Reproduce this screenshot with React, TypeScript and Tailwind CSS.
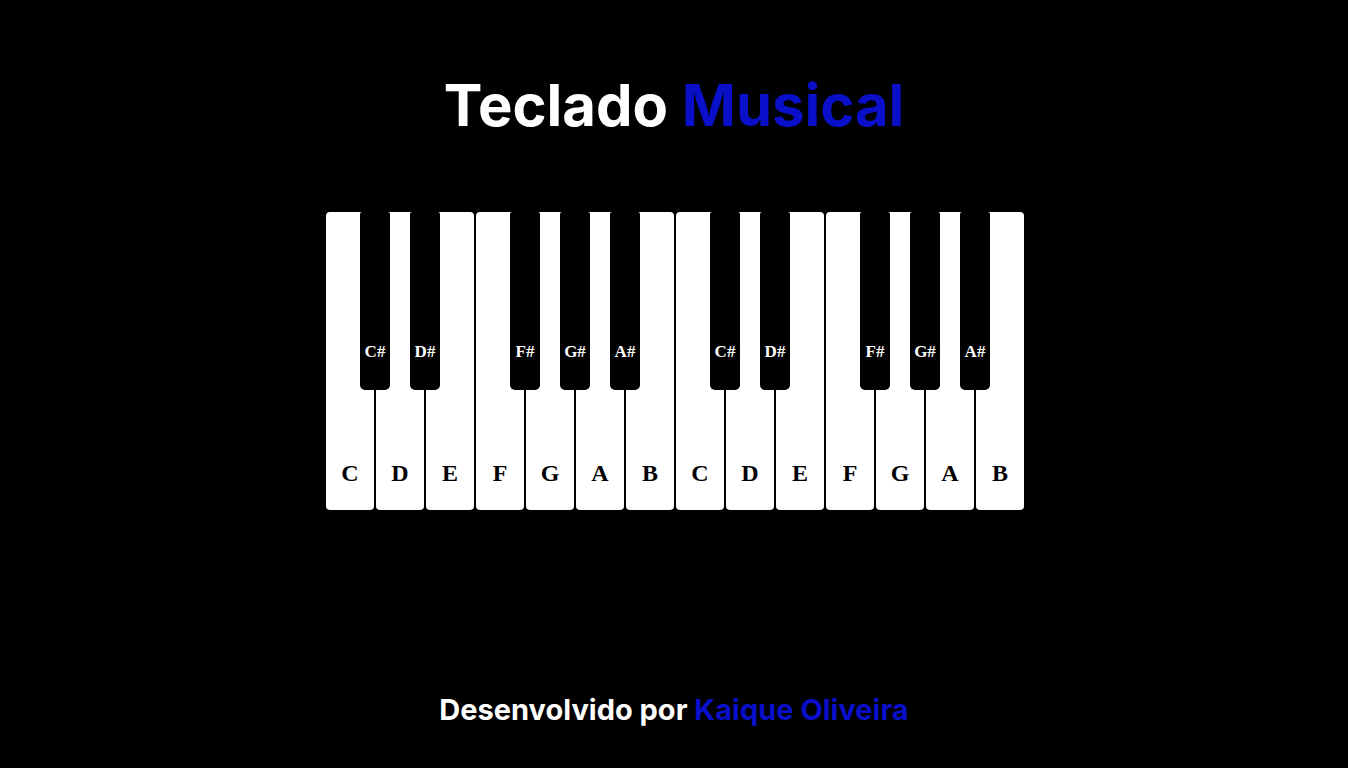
const octave = [
  { note: 'C', sharp: 'C#' },
  { note: 'D', sharp: 'D#' },
  { note: 'E' },
  { note: 'F', sharp: 'F#' },
  { note: 'G', sharp: 'G#' },
  { note: 'A', sharp: 'A#' },
  { note: 'B' },
];

const keys = [...octave, ...octave];

const App = () => {
  return (
    <div className="h-screen w-full bg-black flex flex-col items-center pt-[76px] font-['Inter',sans-serif]">
      <h1 className="text-[58px] leading-none font-bold text-white">
        Teclado <span className="text-[#0a0fc9]">Musical</span>
      </h1>

      <div className="mt-[78px] ml-[2px] flex gap-[2px] font-['Liberation_Serif',serif] font-bold">
        {keys.map((key, i) => (
          <div
            key={i}
            className="relative w-[48px] h-[298px] bg-white rounded-[4px] flex flex-col justify-end items-center pb-[19px] text-black text-[24px]">
            {key.note}
            {key.sharp && (
              <div className="absolute top-0 right-[-16px] z-10 w-[30px] h-[178px] bg-black rounded-b-[5px] rounded-t-[2px] flex flex-col justify-end items-center pb-[26px] text-white text-[17px]">
                {key.sharp}
              </div>
            )}
          </div>
        ))}
      </div>

      <p className="mt-auto mb-[44px] text-[29px] leading-none font-bold text-white">
        Desenvolvido por <span className="text-[#0a0fc9]">Kaique Oliveira</span>
      </p>
    </div>
  );
};

export default App;
